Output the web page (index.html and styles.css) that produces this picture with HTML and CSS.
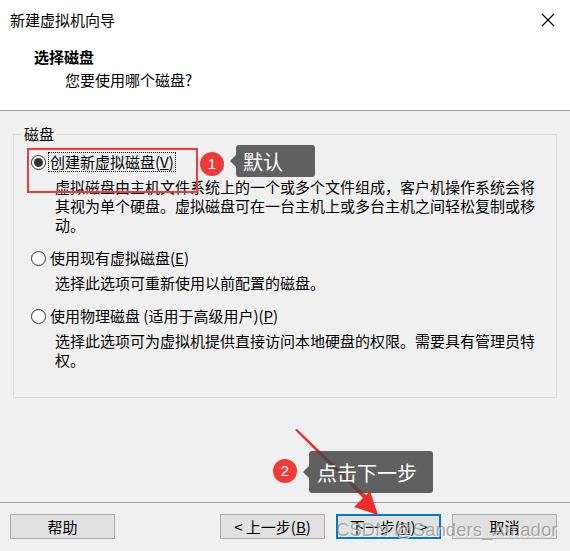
FILE: index.html
```html
<!DOCTYPE html>
<html lang="zh-CN">
<head>
    <meta charset="UTF-8">
    <meta name="viewport" content="width=device-width, initial-scale=1.0">
    <link rel="stylesheet" href="styles.css">
    <title>新建虚拟机向导</title>
</head>
<body>
    <div class="dialog">
        <div class="top">
            <div class="titlebar">
                <span>新建虚拟机向导</span>
                <svg class="close" width="14" height="14" viewBox="0 0 14 14">
                    <path d="M1 1 L13 13 M13 1 L1 13" stroke="#000" stroke-width="1.1" fill="none"/>
                </svg>
            </div>
            <div class="header">
                <div class="h-title">选择磁盘</div>
                <div class="h-sub">您要使用哪个磁盘?</div>
            </div>
        </div>

        <div class="content">
            <fieldset class="group">
                <legend>磁盘</legend>

                <div class="option">
                    <span class="radio checked"></span>
                    <span class="label focus">创建新虚拟磁盘(<u>V</u>)</span>
                </div>
                <div class="desc">虚拟磁盘由主机文件系统上的一个或多个文件组成，客户机操作系统会将其视为单个硬盘。虚拟磁盘可在一台主机上或多台主机之间轻松复制或移动。</div>

                <div class="option gap">
                    <span class="radio"></span>
                    <span class="label">使用现有虚拟磁盘(<u>E</u>)</span>
                </div>
                <div class="desc">选择此选项可重新使用以前配置的磁盘。</div>

                <div class="option gap">
                    <span class="radio"></span>
                    <span class="label">使用物理磁盘 (适用于高级用户)(<u>P</u>)</span>
                </div>
                <div class="desc">选择此选项可为虚拟机提供直接访问本地硬盘的权限。需要具有管理员特权。</div>
            </fieldset>
        </div>

        <div class="footer">
            <button class="btn">帮助</button>
            <div class="btn-group">
                <button class="btn">&lt; 上一步(<u>B</u>)</button>
                <button class="btn primary">下一步(<u>N</u>) &gt;</button>
                <button class="btn">取消</button>
            </div>
        </div>

        <!-- annotations drawn over the screenshot -->
        <div class="mark-box"></div>
        <div class="badge badge-1">1</div>
        <svg class="arrow" width="570" height="551" viewBox="0 0 570 551">
            <polygon points="295,430 297,429 368,497 365,500" fill="#ee2b2b"/>
            <polygon points="378,515 354,507 370,491" fill="#ee2b2b"/>
        </svg>
        <div class="tip tip-1">默认</div>
        <div class="badge badge-2">2</div>
        <div class="tip tip-2">点击下一步</div>
        <div class="watermark">CSDN @Sanders_Amador</div>
    </div>
</body>
</html>
```

FILE: styles.css
```css
body {
    margin: 0;
    padding: 0;
    background-color: #f0f0f0;
    font-family: "Noto Sans CJK SC", "Noto Sans", sans-serif;
    font-size: 15px;
    color: #000;
}

.dialog {
    position: relative;
    width: 570px;
    height: 551px;
    overflow: hidden;
}

.top {
    background-color: #fff;
    height: 110px;
    border-bottom: 1px solid #a0a0a0;
}

.titlebar {
    height: 40px;
    display: flex;
    align-items: center;
    justify-content: space-between;
    padding: 0 15px 0 10px;
    line-height: 20px;
}

.header {
    padding: 7px 0 0 34px;
}

.h-title {
    font-weight: bold;
    line-height: 20px;
}

.h-sub {
    line-height: 20px;
    margin-top: 3px;
    padding-left: 31px;
}

.content {
    height: 391px;
    overflow: hidden;
}

.group {
    margin: 13px 13px 0;
    padding: 8px 0 28px 0;
    border: 1px solid #dcdcdc;
    min-width: 0;
}

.group legend {
    margin-left: 8px;
    padding: 0 2px;
    line-height: 20px;
}

.option {
    display: flex;
    align-items: center;
    height: 20px;
    padding-left: 17px;
}

.option.gap {
    margin-top: 14px;
}

.radio {
    position: relative;
    width: 15px;
    height: 15px;
    box-sizing: border-box;
    border: 1px solid #333;
    border-radius: 50%;
    background-color: #fff;
    flex: none;
}

.radio.checked::after {
    content: "";
    position: absolute;
    left: 2px;
    top: 2px;
    width: 9px;
    height: 9px;
    border-radius: 50%;
    background-color: #333;
}

.label {
    margin-left: 2px;
    padding: 0 1px;
    line-height: 18px;
    border: 1px dotted transparent;
}

.label.focus {
    border-color: #000;
}

.desc {
    width: 490px;
    margin-top: 5px;
    padding-left: 41px;
    line-height: 19px;
}

.footer {
    border-top: 1px solid #a0a0a0;
    display: flex;
    justify-content: space-between;
    padding: 11px 13px 0 10px;
}

.btn-group {
    display: flex;
    gap: 11px;
}

.btn {
    width: 105px;
    height: 25px;
    box-sizing: border-box;
    background-color: #e1e1e1;
    border: 1px solid #adadad;
    font-family: inherit;
    font-size: 15px;
    line-height: 20px;
    padding: 0;
    color: #000;
}

.btn.primary {
    border: 2px solid #0078d7;
}

/* annotations */
.mark-box {
    position: absolute;
    left: 27px;
    top: 148px;
    width: 171px;
    height: 45px;
    box-sizing: border-box;
    border: 2px solid #ef3b3b;
}

.badge {
    position: absolute;
    width: 24px;
    height: 24px;
    border-radius: 50%;
    background-color: #f03a3a;
    color: #fff;
    font-family: "Liberation Sans", sans-serif;
    font-size: 15px;
    line-height: 24px;
    text-align: center;
}

.badge-1 {
    left: 200px;
    top: 152px;
}

.badge-2 {
    left: 273px;
    top: 459px;
}

.tip {
    position: absolute;
    box-sizing: border-box;
    background-color: rgba(72, 72, 72, 0.86);
    color: #fff;
    border-radius: 3px;
    font-size: 20px;
    display: flex;
    align-items: center;
    padding-left: 7px;
}

.tip::before {
    content: "";
    position: absolute;
    left: -6px;
    top: 50%;
    margin-top: -6px;
    border-top: 6px solid transparent;
    border-bottom: 6px solid transparent;
    border-right: 6px solid rgba(72, 72, 72, 0.86);
}

.tip-1 {
    left: 236px;
    top: 145px;
    width: 79px;
    height: 32px;
}

.tip-2 {
    left: 309px;
    top: 451px;
    width: 124px;
    height: 42px;
    padding-left: 8px;
}

.arrow {
    position: absolute;
    left: 0;
    top: 0;
}

.watermark {
    position: absolute;
    left: 336px;
    top: 518px;
    font-family: "Liberation Sans", sans-serif;
    font-size: 18.6px;
    line-height: 24px;
    color: rgba(100, 100, 100, 0.5);
    text-shadow: 1px 1px 0 rgba(255, 255, 255, 0.7);
    white-space: nowrap;
}
```
